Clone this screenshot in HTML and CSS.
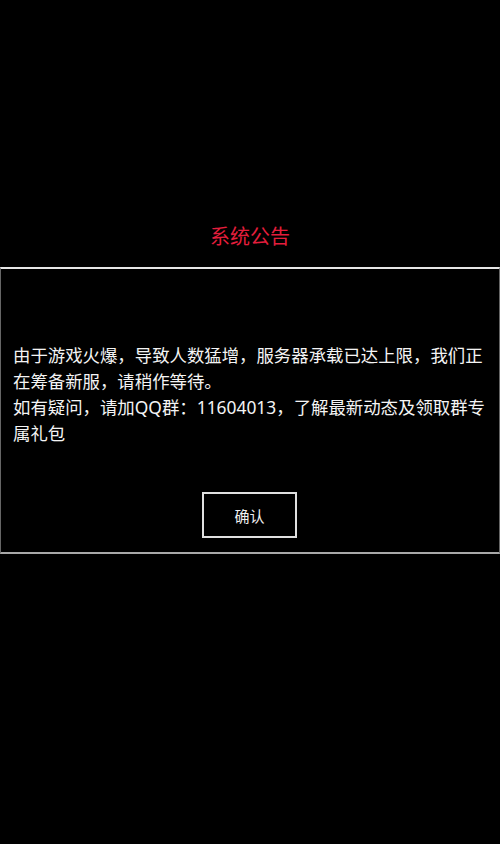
FILE: index.html
```html
<!DOCTYPE html>
<html lang="zh-CN">
<head>
<meta charset="utf-8">
<link rel="stylesheet" href="styles.css">
</head>
<body>
<div class="page">
  <h1 class="title">系统公告</h1>
  <div class="dialog">
    <p class="msg">由于游戏火爆，导致人数猛增，服务器承载已达上限，我们正在筹备新服，请稍作等待。<br>如有疑问，请加QQ群：11604013，了解最新动态及领取群专属礼包</p>
    <div class="actions"><button class="btn">确认</button></div>
  </div>
</div>
</body>
</html>
```
FILE: styles.css
```css
html, body {
  margin: 0;
  padding: 0;
  background: #000;
  height: 100%;
}
.page {
  padding-top: 222px;
  font-family: "Noto Sans", "Noto Sans CJK SC", sans-serif;
  color: #fff;
}
.title {
  margin: 0;
  height: 30px;
  line-height: 30px;
  text-align: center;
  font-size: 20px;
  font-weight: normal;
  color: #e41e3c;
}
.dialog {
  margin-top: 15px;
  border-top: 2px solid #e6e6e6;
  border-bottom: 2px solid #a8a8a8;
  border-left: 1px solid #666;
  border-right: 1px solid #666;
  padding: 73px 12px 14px 12px;
}
.msg {
  margin: 0;
  font-size: 17.4px;
  line-height: 26px;
  color: #f4f4f4;
}
.actions {
  margin-top: 46px;
  display: flex;
  justify-content: center;
}
.btn {
  width: 95px;
  height: 46px;
  box-sizing: border-box;
  background: #000;
  border: 2px solid #e0e0e0;
  color: #f0f0f0;
  font-family: "Noto Sans", "Noto Sans CJK SC", sans-serif;
  font-size: 15px;
  padding: 0;
  margin-left: -1px;
}
```
